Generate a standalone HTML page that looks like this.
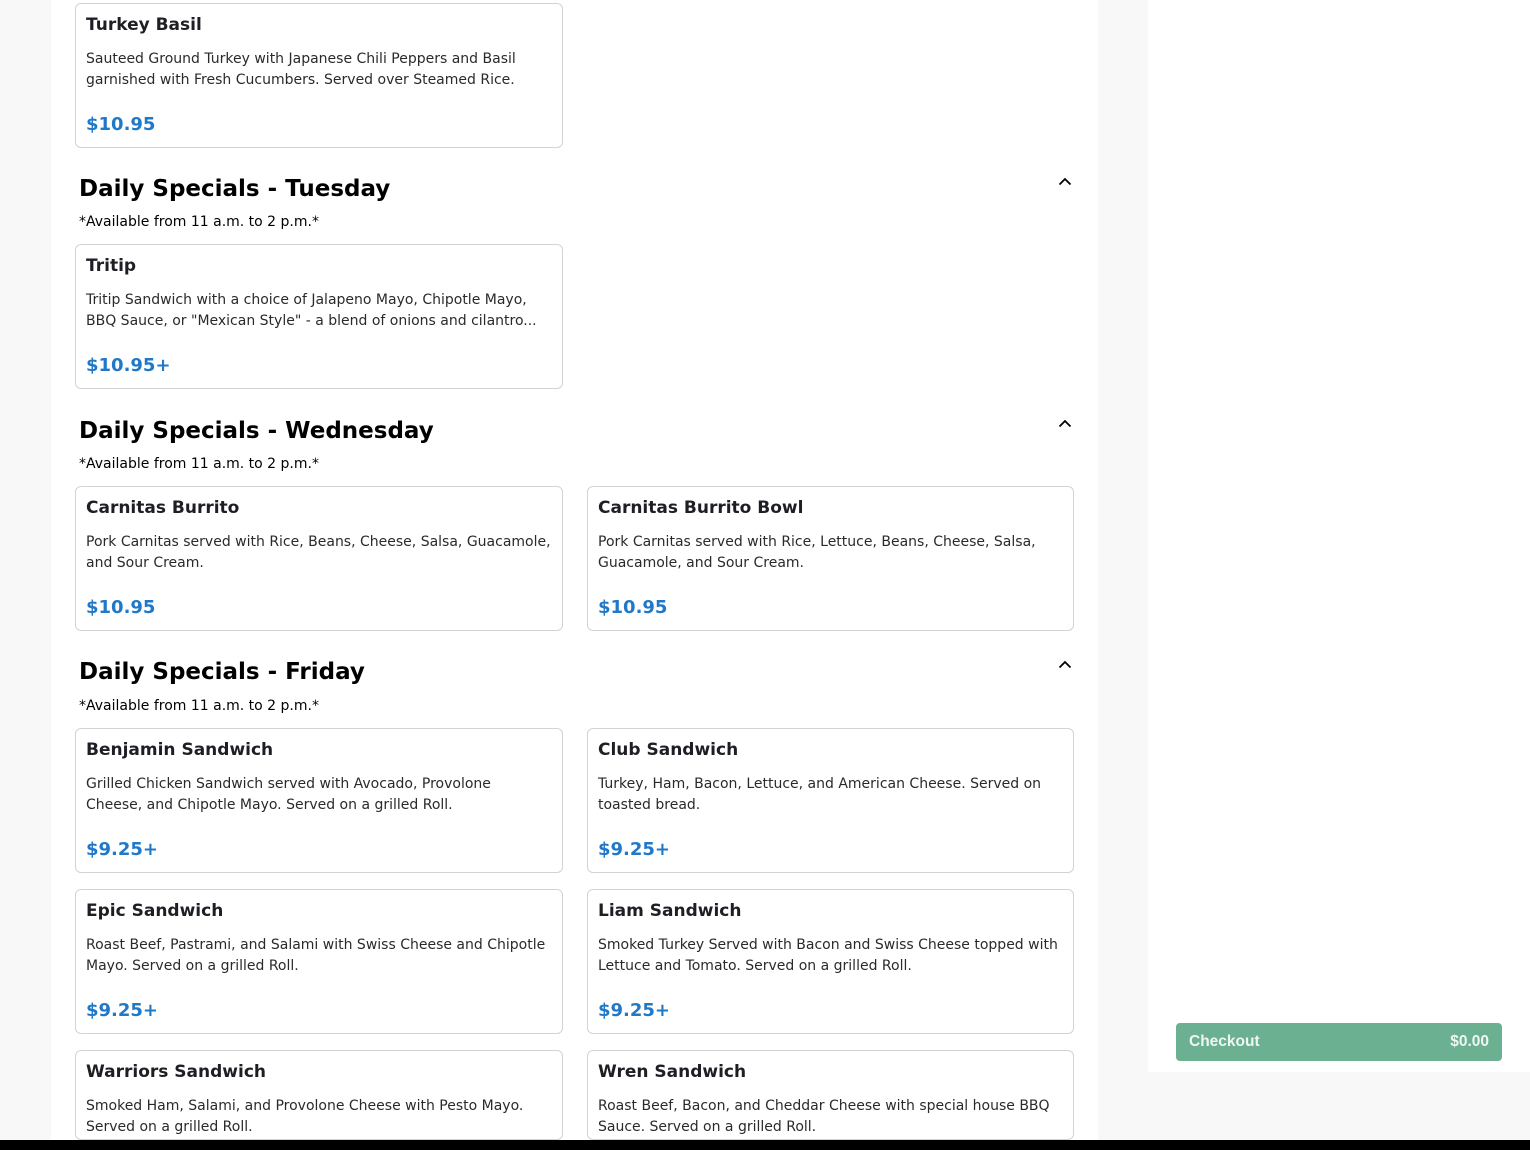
<!DOCTYPE html>
<html><head><meta charset="utf-8"><style>
*{margin:0;padding:0;box-sizing:border-box}
html,body{width:1530px;height:1150px;overflow:hidden}
body{background:#f8f8f8;position:relative;font-family:"DejaVu Sans","Liberation Sans",sans-serif;color:#1e1e24}
.main{position:absolute;left:51px;top:0;width:1047px;height:1150px;background:#fff}
.side{position:absolute;left:1148px;top:0;width:382px;height:1072px;background:#fff}
.card{position:absolute;width:487px;height:145px;border:1px solid #d3d3d3;border-radius:6px;background:#fff;overflow:hidden}
.card.l{width:488px}
.card .t{position:absolute;left:10px;top:10px;font-size:17px;font-weight:bold;line-height:22px;white-space:nowrap}
.card .d{position:absolute;left:10px;top:45px;width:470px;font-size:14px;line-height:21px;color:#2a2a2a}
.card .p{position:absolute;left:10px;top:109px;font-size:18px;font-weight:bold;color:#1f78c8;line-height:24px}
.h{position:absolute;left:79px;font-size:23px;font-weight:bold;color:#000;line-height:30px}
.s{position:absolute;left:79px;font-size:14px;color:#000;line-height:18px}
.chev{position:absolute;left:1058px;width:14px;height:9px}
.co{position:absolute;left:1176px;top:1023px;width:326px;height:38px;background:#6bb091;border-radius:4px;color:#eef7f2;font-weight:bold;font-size:15.5px;font-family:"Liberation Sans",sans-serif}
.bar{position:absolute;left:0;top:1140px;width:1530px;height:10px;background:#000}
</style></head><body>
<div class="main"></div><div class="side"></div>

<div class="card l" style="left:75px;top:3px"><div class="t">Turkey Basil</div><div class="d">Sauteed Ground Turkey with Japanese Chili Peppers and Basil garnished with Fresh Cucumbers. Served over Steamed Rice.</div><div class="p">$10.95</div></div>

<div class="h" style="top:174px">Daily Specials - Tuesday</div>
<div class="s" style="top:213px">*Available from 11 a.m. to 2 p.m.*</div>
<svg class="chev" style="top:177px" viewBox="0 0 14 9"><path d="M1.5 7.5L7 2l5.5 5.5" fill="none" stroke="#000" stroke-width="1.8"/></svg>
<div class="card l" style="left:75px;top:244px"><div class="t">Tritip</div><div class="d">Tritip Sandwich with a choice of Jalapeno Mayo, Chipotle Mayo, BBQ Sauce, or "Mexican Style" - a blend of onions and cilantro...</div><div class="p">$10.95+</div></div>

<div class="h" style="top:416px">Daily Specials - Wednesday</div>
<div class="s" style="top:455px">*Available from 11 a.m. to 2 p.m.*</div>
<svg class="chev" style="top:419px" viewBox="0 0 14 9"><path d="M1.5 7.5L7 2l5.5 5.5" fill="none" stroke="#000" stroke-width="1.8"/></svg>
<div class="card l" style="left:75px;top:486px"><div class="t">Carnitas Burrito</div><div class="d">Pork Carnitas served with Rice, Beans, Cheese, Salsa, Guacamole, and Sour Cream.</div><div class="p">$10.95</div></div>
<div class="card" style="left:587px;top:486px"><div class="t">Carnitas Burrito Bowl</div><div class="d">Pork Carnitas served with Rice, Lettuce, Beans, Cheese, Salsa,<br>Guacamole, and Sour Cream.</div><div class="p">$10.95</div></div>

<div class="h" style="top:657px">Daily Specials - Friday</div>
<div class="s" style="top:697px">*Available from 11 a.m. to 2 p.m.*</div>
<svg class="chev" style="top:660px" viewBox="0 0 14 9"><path d="M1.5 7.5L7 2l5.5 5.5" fill="none" stroke="#000" stroke-width="1.8"/></svg>
<div class="card l" style="left:75px;top:728px"><div class="t">Benjamin Sandwich</div><div class="d">Grilled Chicken Sandwich served with Avocado, Provolone<br>Cheese, and Chipotle Mayo. Served on a grilled Roll.</div><div class="p">$9.25+</div></div>
<div class="card" style="left:587px;top:728px"><div class="t">Club Sandwich</div><div class="d">Turkey, Ham, Bacon, Lettuce, and American Cheese. Served on<br>toasted bread.</div><div class="p">$9.25+</div></div>
<div class="card l" style="left:75px;top:889px"><div class="t">Epic Sandwich</div><div class="d">Roast Beef, Pastrami, and Salami with Swiss Cheese and Chipotle<br>Mayo. Served on a grilled Roll.</div><div class="p">$9.25+</div></div>
<div class="card" style="left:587px;top:889px"><div class="t">Liam Sandwich</div><div class="d">Smoked Turkey Served with Bacon and Swiss Cheese topped with<br>Lettuce and Tomato. Served on a grilled Roll.</div><div class="p">$9.25+</div></div>
<div class="card l" style="left:75px;top:1050px;height:90px"><div class="t">Warriors Sandwich</div><div class="d">Smoked Ham, Salami, and Provolone Cheese with Pesto Mayo.<br>Served on a grilled Roll.</div></div>
<div class="card" style="left:587px;top:1050px;height:90px"><div class="t">Wren Sandwich</div><div class="d">Roast Beef, Bacon, and Cheddar Cheese with special house BBQ<br>Sauce. Served on a grilled Roll.</div></div>

<div class="co"><span style="position:absolute;left:13px;top:10px">Checkout</span><span style="position:absolute;right:13px;top:10px">$0.00</span></div>
<div class="bar"></div>
</body></html>
